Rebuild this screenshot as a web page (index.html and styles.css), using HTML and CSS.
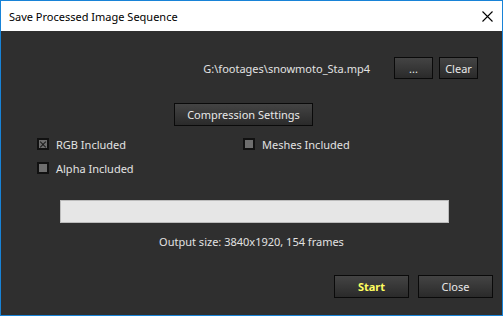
FILE: index.html
```html
<!DOCTYPE html>
<html lang="en">
<head>
    <meta charset="UTF-8">
    <title>Save Processed Image Sequence</title>
    <link rel="stylesheet" href="styles.css">
</head>
<body>
    <div class="window">
        <div class="titlebar">
            <span class="title">Save Processed Image Sequence</span>
            <svg class="close-x" width="11" height="11" viewBox="0 0 11 11">
                <path d="M0.5 0.5 L10.5 10.5 M10.5 0.5 L0.5 10.5" stroke="#000" stroke-width="1.1" fill="none"/>
            </svg>
        </div>

        <div class="content">
            <div class="file-row">
                <span class="path">G:\footages\snowmoto_Sta.mp4</span>
                <button class="btn btn-small">...</button>
                <button class="btn btn-small">Clear</button>
            </div>

            <div class="settings-row">
                <button class="btn btn-wide">Compression Settings</button>
            </div>

            <div class="options">
                <label class="check"><span class="box checked"></span>RGB Included</label>
                <label class="check"><span class="box"></span>Meshes Included</label>
                <label class="check"><span class="box"></span>Alpha Included</label>
            </div>

            <div class="progress"></div>
            <p class="output-size">Output size: 3840x1920, 154 frames</p>

            <div class="actions">
                <button class="btn btn-action btn-start">Start</button>
                <button class="btn btn-action">Close</button>
            </div>
        </div>
    </div>
</body>
</html>
```

FILE: styles.css
```css
body {
    margin: 0;
    font-family: 'Noto Sans', 'Open Sans', sans-serif;
    font-size: 11px;
    background-color: #2f2f2f;
}
.window {
    width: 503px;
    height: 316px;
    box-sizing: border-box;
    border: 1px solid #1883d7;
    display: flex;
    flex-direction: column;
}
.titlebar {
    height: 30px;
    background-color: #fff;
    display: flex;
    align-items: center;
    justify-content: space-between;
    padding: 0 9px 0 8px;
    flex-shrink: 0;
}
.title {
    color: #000;
    font-size: 11px;
}
.close-x {
    margin-top: 1px;
}
.content {
    flex: 1;
    background-color: #2f2f2f;
    color: #e2e2e2;
}
.btn {
    font-family: inherit;
    font-size: 11px;
    color: #e8e8e8;
    background: linear-gradient(#444, #2a2a2a);
    border: 1px solid #0a0a0a;
    padding: 0;
    box-sizing: border-box;
}
.file-row {
    display: flex;
    align-items: center;
    justify-content: flex-end;
    margin-top: 26px;
    padding-right: 24px;
}
.path {
    margin-right: 18px;
}
.btn-small {
    width: 39px;
    height: 22px;
    margin-left: 6px;
}
.settings-row {
    margin-top: 24px;
    padding-left: 173px;
}
.btn-wide {
    width: 139px;
    height: 23px;
}
.options {
    display: grid;
    grid-template-columns: 206px 1fr;
    row-gap: 8px;
    margin-top: 10px;
    padding-left: 36px;
}
.check {
    display: flex;
    align-items: center;
    height: 16px;
}
.box {
    width: 12px;
    height: 12px;
    box-sizing: border-box;
    border: 2px solid #111;
    background-color: #6e6e6e;
    margin-right: 7px;
    position: relative;
}
.box.checked::before,
.box.checked::after {
    content: '';
    position: absolute;
    left: 0;
    top: 3.5px;
    width: 8px;
    height: 1px;
    background-color: #1a1a1a;
    transform: rotate(45deg);
}
.box.checked::after {
    transform: rotate(-45deg);
}
.progress {
    margin: 24px 0 0 59px;
    width: 389px;
    height: 23px;
    box-sizing: border-box;
    background-color: #e6e6e6;
    border: 1px solid #bcbcbc;
}
.output-size {
    margin: 11px 0 0;
    text-align: center;
    line-height: 16px;
}
.actions {
    display: flex;
    justify-content: flex-end;
    gap: 9px;
    margin-top: 25px;
    padding-right: 9px;
}
.btn-action {
    width: 75px;
    height: 23px;
}
.btn-start {
    color: #ffff60;
    font-weight: bold;
}
```
